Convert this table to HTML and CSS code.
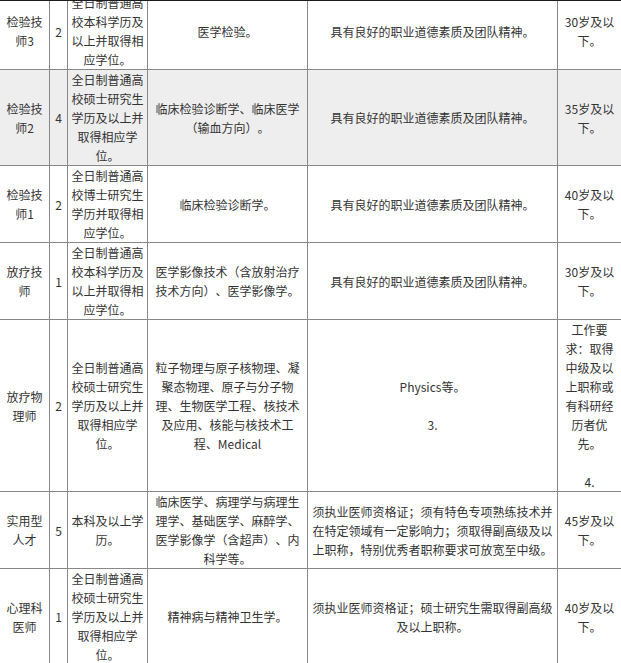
FILE: index.html
```html
<!DOCTYPE html>
<html lang="zh-CN">
<head>
<meta charset="utf-8">
<title>招聘岗位</title>
<link rel="stylesheet" href="styles.css">
</head>
<body>
<div class="frame">
<table class="jobs">
  <tr>
    <td class="c-name">检验技师3</td>
    <td class="c-num">2</td>
    <td class="c-edu">全日制普通高校本科学历及以上并取得相应学位。</td>
    <td class="c-major">医学检验。</td>
    <td class="c-req">具有良好的职业道德素质及团队精神。</td>
    <td class="c-age">30岁及以下。</td>
  </tr>
  <tr class="hl">
    <td>检验技师2</td>
    <td>4</td>
    <td>全日制普通高校硕士研究生学历及以上并取得相应学位。</td>
    <td>临床检验诊断学、临床医学（输血方向）。</td>
    <td>具有良好的职业道德素质及团队精神。</td>
    <td>35岁及以下。</td>
  </tr>
  <tr>
    <td>检验技师1</td>
    <td>2</td>
    <td>全日制普通高校博士研究生学历并取得相应学位。</td>
    <td>临床检验诊断学。</td>
    <td>具有良好的职业道德素质及团队精神。</td>
    <td>40岁及以下。</td>
  </tr>
  <tr>
    <td>放疗技师</td>
    <td>1</td>
    <td>全日制普通高校本科学历及以上并取得相应学位。</td>
    <td>医学影像技术（含放射治疗技术方向）、医学影像学。</td>
    <td>具有良好的职业道德素质及团队精神。</td>
    <td>30岁及以下。</td>
  </tr>
  <tr>
    <td>放疗物理师</td>
    <td>2</td>
    <td>全日制普通高校硕士研究生学历及以上并取得相应学位。</td>
    <td>粒子物理与原子核物理、凝聚态物理、原子与分子物理、生物医学工程、核技术及应用、核能与核技术工程、Medical</td>
    <td>Physics等。<br><br>3.</td>
    <td>工作要求：取得中级及以上职称或有科研经历者优先。<br><br>4.</td>
  </tr>
  <tr>
    <td>实用型人才</td>
    <td>5</td>
    <td>本科及以上学历。</td>
    <td>临床医学、病理学与病理生理学、基础医学、麻醉学、医学影像学（含超声）、内科学等。</td>
    <td>须执业医师资格证；须有特色专项熟练技术并在特定领域有一定影响力；须取得副高级及以上职称，特别优秀者职称要求可放宽至中级。</td>
    <td>45岁及以下。</td>
  </tr>
  <tr>
    <td>心理科医师</td>
    <td>1</td>
    <td>全日制普通高校硕士研究生学历及以上并取得相应学位。</td>
    <td>精神病与精神卫生学。</td>
    <td>须执业医师资格证；硕士研究生需取得副高级及以上职称。</td>
    <td>40岁及以下。</td>
  </tr>
</table>
</div>
</body>
</html>
```

FILE: styles.css
```css
html, body {
  margin: 0;
  padding: 0;
  background: #ffffff;
}

.frame {
  width: 621px;
  height: 662px;
  overflow: hidden;
  border-top: 1px solid #1c1c1c;
}

.jobs {
  margin-top: -9px;
  margin-left: -1px;
  width: 622px;
  table-layout: fixed;
  border-collapse: separate;
  border-spacing: 0;
  border-left: 1px solid #888888;
  border-top: 1px solid #888888;
  font-family: "Noto Sans CJK SC", "Noto Sans", sans-serif;
  font-size: 12px;
  line-height: 19px;
  color: #333333;
  text-spacing-trim: space-all;
}

.jobs td {
  box-sizing: border-box;
  padding: 0 3px;
  border-right: 1px solid #888888;
  border-bottom: 1px solid #888888;
  text-align: center;
  vertical-align: middle;
  word-break: normal;
  line-break: strict;
}

.jobs .c-name { width: 50px; }
.jobs .c-num { width: 18px; }
.jobs .c-edu { width: 80px; }
.jobs .c-major { width: 160px; }
.jobs .c-req { width: 250px; }
.jobs .c-age { width: 64px; }

.jobs tr.hl td {
  background: #eeeeee;
}
```
